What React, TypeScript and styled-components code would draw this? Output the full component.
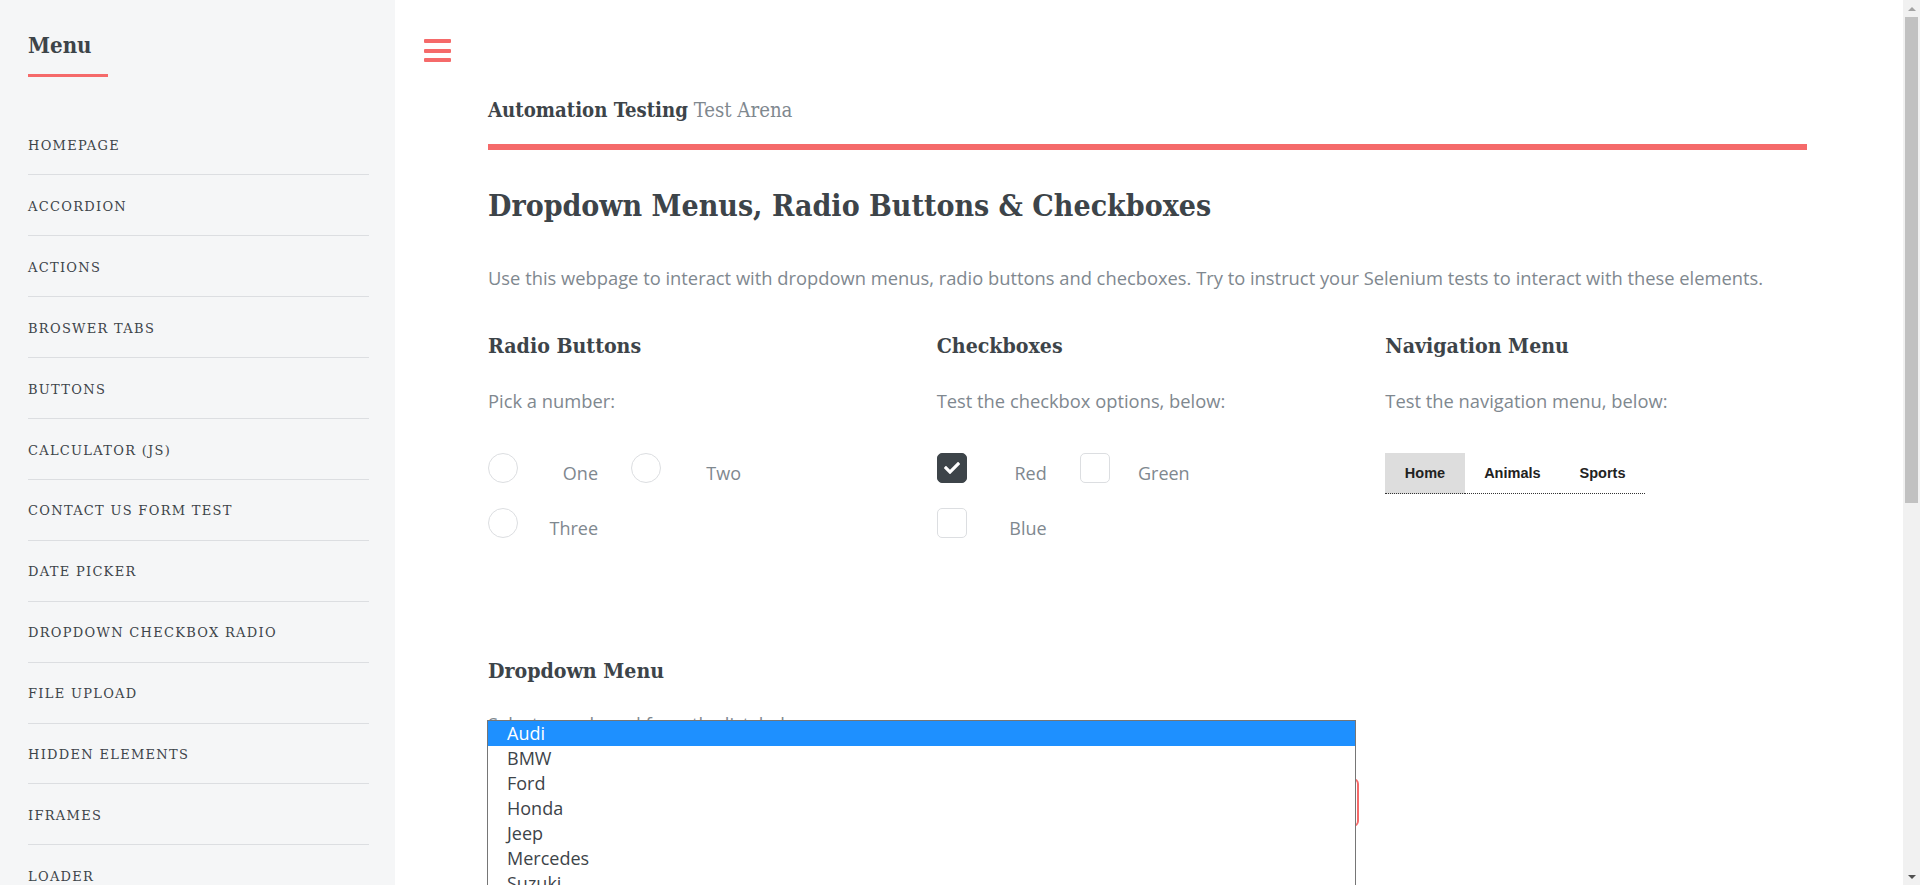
import React from "react";
import styled, { createGlobalStyle } from "styled-components";

const SLAB = `"DejaVu Serif", "Liberation Serif", serif`;
const SANS = `"Open Sans", "Liberation Sans", sans-serif`;

const GlobalStyle = createGlobalStyle`
  html, body { margin: 0; padding: 0; }
  body { font-family: ${SANS}; color: #7f888f; background: #fff; }
  *, *::before, *::after { box-sizing: border-box; }
`;

const Frame = styled.div`
  display: flex;
  align-items: flex-start;
`;

const Page = styled.div`
  flex: 1;
  min-width: 0;
  display: flex;
  min-height: 1546px;
`;

const ScrollTrack = styled.div`
  position: sticky;
  top: 0;
  width: 17px;
  height: 100vh;
  flex-shrink: 0;
  background: #f1f1f1;
  display: flex;
  flex-direction: column;
`;

const ScrollArrow = styled.div<{ $down?: boolean }>`
  height: 17px;
  display: flex;
  align-items: center;
  justify-content: center;
  &::before {
    content: "";
    width: 0;
    height: 0;
    border-left: 4px solid transparent;
    border-right: 4px solid transparent;
    ${(p) =>
      p.$down ? "border-top: 4px solid #505050;" : "border-bottom: 4px solid #a3a3a3;"}
  }
`;

const ScrollThumb = styled.div`
  height: 486px;
  margin: 0 2px;
  background: #c1c1c1;
`;

const ScrollSpace = styled.div`
  flex: 1;
`;

const Sidebar = styled.aside`
  width: 395px;
  flex-shrink: 0;
  background: #f5f6f7;
  padding: 28px 26px 0 28px;
`;

const SidebarTitle = styled.h2`
  margin: 0;
  font-family: ${SLAB};
  font-stretch: condensed;
  font-weight: 700;
  font-size: 22.1px;
  line-height: 34px;
  color: #3d4449;
  &::after {
    content: "";
    display: block;
    width: 80px;
    height: 3px;
    margin-top: 12px;
    background: #f56a6a;
  }
`;

const MenuList = styled.ul`
  list-style: none;
  margin: 37.5px 0 0;
  padding: 0;
`;

const MenuItem = styled.li`
  border-top: 1px solid #dcdee1;
  &:first-child {
    border-top: none;
  }
`;

const MenuLink = styled.a`
  display: block;
  padding: 20.5px 0 16.5px;
  line-height: 22.9px;
  font-family: ${SLAB};
  font-size: 13px;
  letter-spacing: 1.3px;
  text-transform: uppercase;
  color: #3d4449;
  text-decoration: none;
`;

const Main = styled.main`
  flex: 1;
  min-width: 0;
  background: #fff;
`;

const TopBar = styled.div`
  height: 62px;
  padding: 39px 0 0 29px;
`;

const Hamburger = styled.button`
  display: flex;
  flex-direction: column;
  justify-content: space-between;
  width: 27px;
  height: 23px;
  padding: 0;
  border: 0;
  background: none;
  cursor: pointer;
  span {
    display: block;
    height: 4px;
    border-radius: 1px;
    background: #f56a6a;
  }
`;

const Inner = styled.div`
  padding: 0 96px 0 93px;
`;

const Header = styled.header`
  margin-top: 33px;
  padding-bottom: 19px;
  border-bottom: 6px solid #f56a6a;
`;

const Logo = styled.a`
  display: block;
  font-family: ${SLAB};
  font-stretch: condensed;
  font-size: 20.2px;
  line-height: 30px;
  color: #7f888f;
  text-decoration: none;
  strong {
    font-weight: 700;
    color: #3d4449;
  }
`;

const Title = styled.h1`
  margin: 35px 0 0;
  font-family: ${SLAB};
  font-stretch: condensed;
  font-weight: 700;
  font-size: 30px;
  line-height: 41.6px;
  color: #3d4449;
`;

const Text = styled.p<{ $top: number }>`
  margin: ${(p) => p.$top}px 0 0;
  font-size: 18.33px;
  line-height: 29.7px;
  color: #7f888f;
`;

const Columns = styled.div`
  margin-top: 36px;
  display: grid;
  grid-template-columns: repeat(3, 1fr);
  column-gap: 27px;
`;

const Heading = styled.h3<{ $top?: number }>`
  margin: ${(p) => p.$top ?? 0}px 0 0;
  font-family: ${SLAB};
  font-stretch: condensed;
  font-weight: 700;
  font-size: 21.15px;
  line-height: 34.5px;
  color: #3d4449;
`;

const Options = styled.div`
  margin-top: 37px;
  display: flex;
  flex-wrap: wrap;
  row-gap: 19.3px;
`;

const Option = styled.label`
  display: flex;
  align-items: flex-start;
  margin-right: 33px;
  cursor: pointer;
`;

const Radio = styled.span`
  width: 30px;
  height: 30px;
  border-radius: 50%;
  border: 1px solid #dcdee1;
  background: #fff;
  flex-shrink: 0;
`;

const Check = styled.span<{ $checked?: boolean }>`
  width: 30px;
  height: 30px;
  border-radius: 5px;
  border: 1px solid ${(p) => (p.$checked ? "#3d4449" : "#dcdee1")};
  background: ${(p) => (p.$checked ? "#3d4449" : "#fff")};
  flex-shrink: 0;
  display: flex;
  align-items: center;
  justify-content: center;
`;

const OptionText = styled.span`
  width: 80px;
  margin-top: 6px;
  text-align: right;
  font-size: 18px;
  line-height: 29.7px;
  color: #7f888f;
`;

const Nav = styled.ul`
  margin: 37px 0 0;
  padding: 0;
  list-style: none;
  display: flex;
`;

const NavTab = styled.li<{ $active?: boolean }>`
  height: 41px;
  padding: 0 19.5px;
  display: flex;
  align-items: center;
  border-bottom: 1px dotted #333;
  background: ${(p) => (p.$active ? "#dddddd" : "transparent")};
  font-family: "Liberation Sans", Arial, sans-serif;
  font-weight: 700;
  font-size: 14.5px;
  color: #222;
`;

const DropdownArea = styled.div`
  position: relative;
  margin-top: 20.5px;
`;

const SelectBox = styled.div`
  margin: 39.3px 0 0 -1px;
  width: 872px;
  height: 49px;
  border: 2px solid #f56a6a;
  border-radius: 6px;
  background: #fff;
`;

const ListBox = styled.ul`
  position: absolute;
  top: 11px;
  left: -1px;
  width: 869px;
  margin: 0;
  padding: 0;
  list-style: none;
  background: #fff;
  border: 1px solid #767676;
`;

const ListOption = styled.li<{ $selected?: boolean }>`
  height: 25px;
  line-height: 25px;
  padding-left: 19px;
  font-size: 18px;
  color: ${(p) => (p.$selected ? "#fff" : "#3d4449")};
  background: ${(p) => (p.$selected ? "#1e90ff" : "#fff")};
`;

const menu = [
  "Homepage",
  "Accordion",
  "Actions",
  "Broswer Tabs",
  "Buttons",
  "Calculator (JS)",
  "Contact Us Form Test",
  "Date Picker",
  "Dropdown Checkbox Radio",
  "File Upload",
  "Hidden Elements",
  "Iframes",
  "Loader",
  "Loader Two",
  "Login Portal Test",
];

const cars = ["Audi", "BMW", "Ford", "Honda", "Jeep", "Mercedes", "Suzuki", "Toyota", "Volvo"];

const CheckIcon = () => (
  <svg width="16" height="16" viewBox="0 0 512 512" aria-hidden="true">
    <path
      fill="#fff"
      d="M173.898 439.404l-166.4-166.4c-9.997-9.997-9.997-26.206 0-36.204l36.203-36.204c9.997-9.998 26.207-9.998 36.204 0L192 312.69 432.095 72.596c9.997-9.997 26.207-9.997 36.204 0l36.203 36.204c9.997 9.997 9.997 26.206 0 36.204l-294.4 294.401c-9.998 9.997-26.207 9.997-36.204-.001z"
    />
  </svg>
);

export default function App() {
  return (
    <>
      <GlobalStyle />
      <Frame>
        <Page>
          <Sidebar>
            <SidebarTitle>Menu</SidebarTitle>
            <MenuList>
              {menu.map((m) => (
                <MenuItem key={m}>
                  <MenuLink href="#">{m}</MenuLink>
                </MenuItem>
              ))}
            </MenuList>
          </Sidebar>
          <Main>
            <TopBar>
              <Hamburger aria-label="Toggle menu">
                <span />
                <span />
                <span />
              </Hamburger>
            </TopBar>
            <Inner>
              <Header>
                <Logo href="#">
                  <strong>Automation Testing</strong> Test Arena
                </Logo>
              </Header>
              <Title>Dropdown Menus, Radio Buttons &amp; Checkboxes</Title>
              <Text $top={36.5}>
                Use this webpage to interact with dropdown menus, radio buttons and checboxes. Try to instruct your
                Selenium tests to interact with these elements.
              </Text>
              <Columns>
                <div>
                  <Heading>Radio Buttons</Heading>
                  <Text $top={22.7}>Pick a number:</Text>
                  <Options>
                    {["One", "Two", "Three"].map((o) => (
                      <Option key={o}>
                        <Radio />
                        <OptionText>{o}</OptionText>
                      </Option>
                    ))}
                  </Options>
                </div>
                <div>
                  <Heading>Checkboxes</Heading>
                  <Text $top={22.7}>Test the checkbox options, below:</Text>
                  <Options>
                    {["Red", "Green", "Blue"].map((o) => (
                      <Option key={o}>
                        <Check $checked={o === "Red"}>{o === "Red" && <CheckIcon />}</Check>
                        <OptionText>{o}</OptionText>
                      </Option>
                    ))}
                  </Options>
                </div>
                <div>
                  <Heading>Navigation Menu</Heading>
                  <Text $top={22.7}>Test the navigation menu, below:</Text>
                  <Nav>
                    <NavTab $active>Home</NavTab>
                    <NavTab>Animals</NavTab>
                    <NavTab>Sports</NavTab>
                  </Nav>
                </div>
              </Columns>
              <Heading $top={110.3}>Dropdown Menu</Heading>
              <DropdownArea>
                <Text $top={0}>Select a car brand from the list, below:</Text>
                <SelectBox />
                <ListBox>
                  {cars.map((c) => (
                    <ListOption key={c} $selected={c === "Audi"}>
                      {c}
                    </ListOption>
                  ))}
                </ListBox>
              </DropdownArea>
            </Inner>
          </Main>
        </Page>
        <ScrollTrack aria-hidden="true">
          <ScrollArrow />
          <ScrollThumb />
          <ScrollSpace />
          <ScrollArrow $down />
        </ScrollTrack>
      </Frame>
    </>
  );
}
